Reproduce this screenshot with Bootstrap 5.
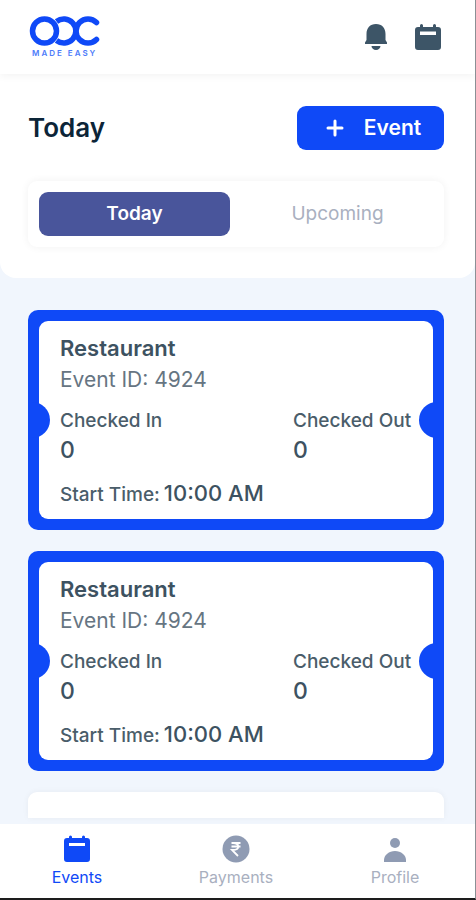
<!DOCTYPE html>
<html lang="en">
<head>
<meta charset="utf-8">
<meta name="viewport" content="width=device-width, initial-scale=1">
<title>ODC Made Easy – Events</title>
<link href="https://cdn.jsdelivr.net/npm/bootstrap@5.3.0/dist/css/bootstrap.min.css" rel="stylesheet">
<style>
  :root { --brand: #0f49f7; --ink: #3d5261; --muted: #a9b0bf; }
  body { font-family: Inter, "Liberation Sans", sans-serif; background: #f1f6fd; color: var(--ink); }
  .app { border-right: 1px solid #8b9095; border-bottom: 2px solid #1d1d1d; overflow: hidden; }
  .gutter { padding-left: 28px; padding-right: 31px; }
  .topbar { height: 74px; box-shadow: 0 2px 8px rgba(0,0,0,.05); z-index: 1; }
  .topbar button { line-height: 0; }
  .topbar-actions { margin-right: 2px; }
  .hero { border-radius: 0 0 16px 16px; padding-top: 32px; padding-bottom: 31px; }
  .hero h1 { font-size: 26px; line-height: 32px; font-weight: 600; color: #0c2538; }
  .btn-event { background: var(--brand); color: #fff; width: 147px; height: 44px; border-radius: 9px; font-size: 21px; font-weight: 600; gap: 20px; }
  .btn-event:hover { background: #0a3fdc; color: #fff; }
  .btn-event svg { margin-left: 6px; }
  .switcher { margin-top: 31px; padding: 11px; gap: 12px; border-radius: 9px; box-shadow: 0 0 8px rgba(0,0,0,.06); }
  .switcher .btn { height: 44px; border: 0; border-radius: 9px; font-size: 19px; color: var(--muted); flex: 1 1 0; }
  .switcher .btn.active { background: #49559b; color: #fff; font-weight: 600; }
  .events { padding-top: 32px; gap: 21px; }
  .ticket { background: var(--brand); padding: 11px; border-radius: 10px; }
  .stub { background: #fff; border-radius: 9px; padding: 11px 21px; }
  .notch { position: absolute; top: 92px; width: 22px; height: 36px; background: var(--brand); }
  .notch-start { left: 0; border-radius: 0 18px 18px 0; }
  .notch-end { right: 0; width: 25px; border-radius: 18px 0 0 18px; }
  .ticket h2 { font-size: 22px; line-height: 32px; font-weight: 600; }
  .event-id { font-size: 21px; line-height: 32px; color: #667582; }
  .lbl { font-size: 19px; line-height: 26px; font-weight: 500; color: #4a5d6a; }
  .val { font-size: 23px; line-height: 32px; font-weight: 500; }
  .counts { padding-top: 12px; }
  .counts > :last-child { width: 119px; }
  .start { padding-top: 14px; gap: 4px; }
  .start .val { font-size: 22px; line-height: 26px; }
  .peek { height: 26px; background: #fff; border-radius: 9px 9px 0 0; box-shadow: 0 0 6px rgba(0,0,0,.05); }
  .tabbar { margin-top: auto; height: 74px; padding: 10px 3px 0 0; }
  .tabbar a { color: var(--muted); font-size: 16px; line-height: 20px; gap: 3px; width: 154px; }
  .tabbar a.active { color: var(--brand); }
  .tabbar svg { color: #8f9bb3; }
  .tabbar a.active svg { color: var(--brand); }
</style>
</head>
<body>
<div class="app min-vh-100 d-flex flex-column">
  <header class="topbar gutter bg-white d-flex align-items-center justify-content-between position-relative">
    <a href="#" class="text-decoration-none" aria-label="ODC Made Easy">
      <svg width="74" height="44" viewBox="0 0 74 44" fill="none" stroke="#0f49f7" stroke-width="5.500">
        <circle cx="16.500" cy="16" r="12"/>
        <path d="M28.500 6.500A12 12 0 1 1 28.500 25.500"/>
        <path d="M68.500 7.500A12 12 0 1 0 68.500 24.500" stroke-linecap="round"/>
        <text x="4" y="41" font-family="Inter, sans-serif" font-size="8" font-weight="600" fill="#4d7bfa" stroke="none" letter-spacing="2">MADE EASY</text>
      </svg>
    </a>
    <div class="topbar-actions d-flex align-items-center">
      <button type="button" class="btn p-0 border-0 me-4" aria-label="Notifications">
        <svg width="28" height="28" viewBox="0 0 28 28" fill="#3d5567"><path d="M14 1C8 1 4.500 5 4.500 11v6L3 19.500V21h22v-1.500L23.500 17v-6C23.500 5 20 1 14 1Z"/><path d="M9.500 23h9a4.500 4 0 0 1-9 0Z"/></svg>
      </button>
      <button type="button" class="btn p-0 border-0" aria-label="Calendar">
        <svg width="28" height="28" viewBox="1 0 28 28" fill="#3d5567"><path fill-rule="evenodd" d="M5 4h20q3 0 3 3v17q0 3-3 3H5q-3 0-3-3V7q0-3 3-3ZM7 8.500v3.500h16V8.500Z"/><path d="M8.500 2.500v3M21.500 2.500v3" stroke="#3d5567" stroke-width="3" stroke-linecap="round"/></svg>
      </button>
    </div>
  </header>

  <section class="hero gutter bg-white">
    <div class="d-flex align-items-center justify-content-between">
      <h1 class="mb-0">Today</h1>
      <button type="button" class="btn btn-event border-0 p-0 d-flex align-items-center justify-content-center">
        <svg width="18" height="18" viewBox="0 0 18 18" stroke="#fff" stroke-width="3" stroke-linecap="round" aria-hidden="true"><path d="M9 2v14M2 9h14"/></svg>
        Event
      </button>
    </div>
    <div class="switcher d-flex">
      <button type="button" class="btn active p-0">Today</button>
      <button type="button" class="btn p-0">Upcoming</button>
    </div>
  </section>

  <main class="events gutter d-flex flex-column">
    <article class="ticket position-relative">
      <div class="stub">
        <h2 class="mb-0">Restaurant</h2>
        <div class="event-id">Event ID: 4924</div>
        <div class="counts d-flex justify-content-between">
          <div><div class="lbl">Checked In</div><div class="val">0</div></div>
          <div><div class="lbl text-nowrap">Checked Out</div><div class="val">0</div></div>
        </div>
        <div class="start d-flex align-items-baseline"><span class="lbl">Start Time:</span><span class="val">10:00 AM</span></div>
      </div>
      <span class="notch notch-start"></span><span class="notch notch-end"></span>
    </article>
    <article class="ticket position-relative">
      <div class="stub">
        <h2 class="mb-0">Restaurant</h2>
        <div class="event-id">Event ID: 4924</div>
        <div class="counts d-flex justify-content-between">
          <div><div class="lbl">Checked In</div><div class="val">0</div></div>
          <div><div class="lbl text-nowrap">Checked Out</div><div class="val">0</div></div>
        </div>
        <div class="start d-flex align-items-baseline"><span class="lbl">Start Time:</span><span class="val">10:00 AM</span></div>
      </div>
      <span class="notch notch-start"></span><span class="notch notch-end"></span>
    </article>
    <div class="peek"></div>
  </main>

  <nav class="tabbar bg-white d-flex justify-content-between" aria-label="Main">
    <a href="#" class="active text-decoration-none d-flex flex-column align-items-center">
      <svg width="30" height="30" viewBox="0 0 30 30" fill="currentColor"><path fill-rule="evenodd" d="M5 4h20q3 0 3 3v18q0 3-3 3H5q-3 0-3-3V7q0-3 3-3ZM7 9v3h16V9Z"/><path d="M8.500 3v3M21.500 3v3" stroke="currentColor" stroke-width="3" stroke-linecap="round"/></svg>
      Events
    </a>
    <a href="#" class="text-decoration-none d-flex flex-column align-items-center">
      <svg width="30" height="30" viewBox="0 0 30 30"><circle cx="15" cy="15" r="13.500" fill="currentColor"/><path d="M10.500 9h9M10.500 12.500h9M12 9c7 0 7 7 0 7h-1l6 6" fill="none" stroke="#fff" stroke-width="1.800"/></svg>
      Payments
    </a>
    <a href="#" class="text-decoration-none d-flex flex-column align-items-center">
      <svg width="30" height="30" viewBox="0 0 30 30" fill="currentColor"><circle cx="15" cy="9" r="5"/><path d="M4 28v-2c0-5 5-9 11-9s11 4 11 9v2Z"/></svg>
      Profile
    </a>
  </nav>
</div>
<script src="https://cdn.jsdelivr.net/npm/bootstrap@5.3.0/dist/js/bootstrap.bundle.min.js"></script>
</body>
</html>
